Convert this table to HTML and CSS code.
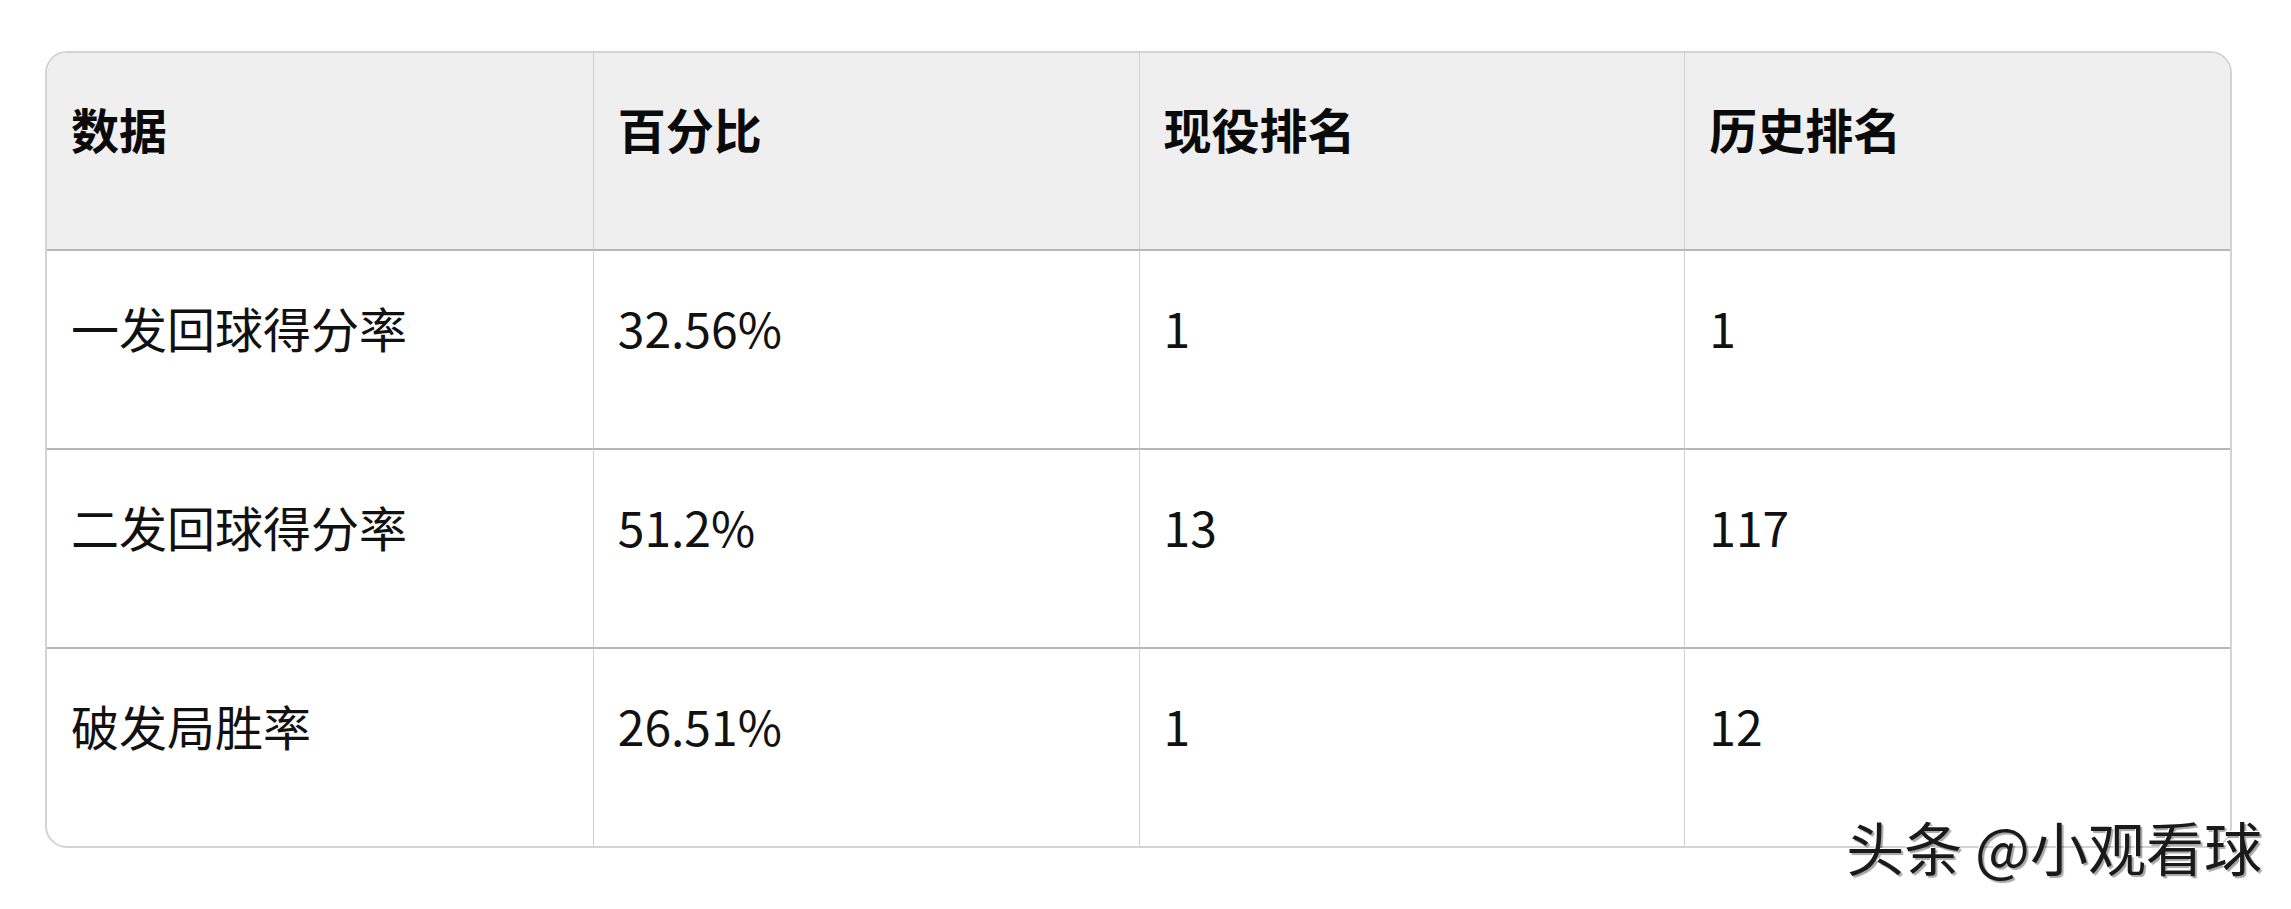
FILE: index.html
```html
<!DOCTYPE html>
<html lang="zh-CN">
<head>
<meta charset="utf-8">
<title>数据表</title>
<link rel="stylesheet" href="styles.css">
</head>
<body>
<div class="page">
  <div class="table-wrap">
    <table class="stats">
      <thead>
        <tr>
          <th>数据</th>
          <th>百分比</th>
          <th>现役排名</th>
          <th>历史排名</th>
        </tr>
      </thead>
      <tbody>
        <tr>
          <td>一发回球得分率</td>
          <td>32.56%</td>
          <td>1</td>
          <td>1</td>
        </tr>
        <tr>
          <td>二发回球得分率</td>
          <td>51.2%</td>
          <td>13</td>
          <td>117</td>
        </tr>
        <tr>
          <td>破发局胜率</td>
          <td>26.51%</td>
          <td>1</td>
          <td>12</td>
        </tr>
      </tbody>
    </table>
  </div>
  <div class="watermark">头条 @小观看球</div>
</div>
</body>
</html>
```

FILE: styles.css
```css
html, body {
  margin: 0;
  padding: 0;
  background: #ffffff;
}

body {
  font-family: "Noto Sans CJK SC", "Noto Sans", sans-serif;
  color: #111111;
}

.page {
  position: relative;
  width: 2291px;
  height: 909px;
  padding: 51px 0 0 45px;
  box-sizing: border-box;
}

.table-wrap {
  width: 2187px;
  border: 2px solid #d3d3d3;
  border-radius: 22px;
  overflow: hidden;
  box-sizing: border-box;
}

.stats {
  width: 100%;
  border-collapse: separate;
  border-spacing: 0;
  table-layout: fixed;
}

.stats th,
.stats td {
  box-sizing: border-box;
  padding: 39px 24px 0 24px;
  vertical-align: top;
  text-align: left;
  font-size: 48px;
  line-height: 72px;
}

.stats th {
  height: 196px;
  background: #efefef;
  font-weight: 700;
  color: #0a0a0a;
}

.stats td {
  height: 199px;
  padding-top: 40px;
  font-weight: 400;
  border-top: 2px solid #b6b6b6;
}

.stats th + th,
.stats td + td {
  border-left: 1px solid #d0d0d0;
}

.watermark {
  position: absolute;
  right: 29px;
  top: 806px;
  font-size: 58px;
  line-height: 80px;
  font-weight: 400;
  color: #1a1a1a;
  text-shadow: -1px -1px 0 #ffffff, 2px 2px 1px rgba(0, 0, 0, 0.35);
  white-space: nowrap;
}
```
